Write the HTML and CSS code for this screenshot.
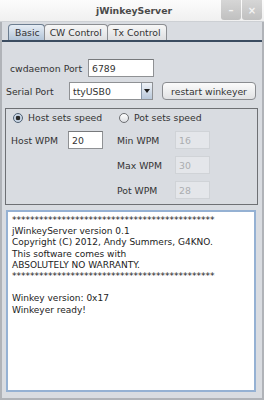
FILE: index.html
```html
<!DOCTYPE html>
<html lang="en">
<head>
    <meta charset="UTF-8">
    <title>jWinkeyServer</title>
    <link rel="stylesheet" href="styles.css">
</head>
<body>
    <div class="titlebar">
        <span class="title">jWinkeyServer</span>
        <div class="wm-buttons">
            <span class="wm-btn">&#8211;</span>
            <span class="wm-btn">&#215;</span>
        </div>
    </div>
    <div class="window">
        <div class="tabs">
            <span class="tab active">Basic</span>
            <span class="tab">CW Control</span>
            <span class="tab">Tx Control</span>
        </div>
        <div class="row row-port">
            <span class="lbl lbl-port">cwdaemon Port</span>
            <span class="field field-port">6789</span>
        </div>
        <div class="row row-serial">
            <span class="lbl lbl-serial">Serial Port</span>
            <div class="combo">
                <span class="combo-text">ttyUSB0</span>
                <span class="combo-arrow"><span class="tri"></span></span>
            </div>
            <span class="btn">restart winkeyer</span>
        </div>
        <div class="group">
            <div class="radio-item radio-host"><span class="radio checked"></span>Host sets speed</div>
            <div class="radio-item radio-pot"><span class="radio"></span>Pot sets speed</div>

            <span class="lbl c1">Host WPM</span>
            <span class="field c2">20</span>
            <span class="lbl c4">Min WPM</span>
            <span class="field disabled c5">16</span>

            <span class="lbl c4">Max WPM</span>
            <span class="field disabled c5">30</span>

            <span class="lbl c4">Pot WPM</span>
            <span class="field disabled c5">28</span>
        </div>
        <div class="log">*********************************************<br>jWinkeyServer version 0.1<br>Copyright (C) 2012, Andy Summers, G4KNO.<br>This software comes with<br>ABSOLUTELY NO WARRANTY.<br>*********************************************<br><br>Winkey version: 0x17<br>Winkeyer ready!</div>
    </div>
</body>
</html>
```

FILE: styles.css
```css
body {
    margin: 0;
    width: 264px;
    height: 400px;
    overflow: hidden;
    font-family: 'DejaVu Sans', sans-serif;
    font-size: 9.3px;
    color: #333;
    background: #d9dce1;
}
.titlebar {
    position: relative;
    height: 22px;
    display: flex;
    align-items: center;
    justify-content: center;
    background: linear-gradient(#fcfcfc, #f0f0f0);
    border-bottom: 1px solid #cdd0d4;
    box-sizing: border-box;
}
.title {
    font-weight: bold;
    font-size: 9.3px;
    color: #4a4a4a;
    padding-left: 4px;
}
.wm-buttons {
    position: absolute;
    top: 0;
    right: 2px;
    display: flex;
    gap: 1px;
}
.wm-btn {
    width: 20px;
    height: 20px;
    display: flex;
    align-items: center;
    justify-content: center;
    background: linear-gradient(#d6d6d6, #c0c0c0);
    border-radius: 0 0 3px 3px;
    color: #f4f4f4;
    font-size: 10px;
    font-weight: bold;
}
.window {
    height: 378px;
    border: 2px solid #b0b3b8;
    border-top: none;
    box-sizing: border-box;
}
.tabs {
    display: flex;
    align-items: flex-end;
    padding: 4px 0 0 6px;
    height: 20px;
    box-sizing: border-box;
    border-bottom: 2px solid #3b4c60;
}
.tab {
    height: 16px;
    box-sizing: border-box;
    padding: 0 5px;
    display: flex;
    align-items: center;
    border: 1px solid #8c8e92;
    border-bottom: none;
    border-radius: 4px 4px 0 0;
    background: linear-gradient(#f7f7f7, #dedfe1);
    margin-right: -1px;
}
.tab.active {
    background: linear-gradient(#e6edf5, #b3c5d8);
    border-color: #6c7d90;
    padding: 0 4px 0 6px;
}
.row {
    display: flex;
    align-items: center;
}
.row-port {
    margin-top: 17px;
    padding-left: 8px;
}
.lbl-port {
    width: 78px;
}
.row-serial {
    margin-top: 5px;
    padding-left: 4px;
}
.lbl-serial {
    width: 63px;
}
.field {
    height: 18px;
    box-sizing: border-box;
    display: flex;
    align-items: center;
    padding-left: 3px;
    background: #fff;
    border: 1px solid #8f9194;
    border-top-color: #77797c;
}
.field-port {
    width: 66px;
}
.field.disabled {
    background: #e4e6ea;
    border-color: #d0d3d7;
    color: #abadb0;
}
.combo {
    width: 84px;
    height: 18px;
    box-sizing: border-box;
    display: flex;
    background: #fff;
    border: 1px solid #8f9194;
}
.combo-text {
    flex: 1;
    display: flex;
    align-items: center;
    padding-left: 3px;
}
.combo-arrow {
    width: 10px;
    display: flex;
    align-items: center;
    justify-content: center;
    border-left: 1px solid #8a98a8;
    background: linear-gradient(#eef2f7, #b9c8da);
}
.tri {
    width: 0;
    height: 0;
    border-left: 3px solid transparent;
    border-right: 3px solid transparent;
    border-top: 4px solid #1c1c1c;
}
.btn {
    margin-left: 9px;
    width: 94px;
    height: 18px;
    box-sizing: border-box;
    display: flex;
    align-items: center;
    justify-content: center;
    border: 1px solid #8a8c90;
    border-radius: 4px;
    background: linear-gradient(#fbfbfb, #e1e2e4);
}
.group {
    margin: 8px 0 0 3px;
    width: 253px;
    height: 97px;
    box-sizing: border-box;
    border: 1px solid #6e7074;
    padding: 2px 0 5px 5px;
    display: grid;
    grid-template-columns: 57px 35px 14px 58px 35px;
    grid-template-rows: 13px 18px 18px 18px;
    row-gap: 7px;
    align-items: center;
}
.c1 { grid-column: 1; }
.c2 { grid-column: 2; }
.c4 { grid-column: 4; }
.c5 { grid-column: 5; }
.radio-item {
    display: flex;
    align-items: center;
    gap: 5px;
    margin-left: 2px;
}
.radio-host { grid-column: 1 / 4; }
.radio-pot { grid-column: 4 / 6; }
.radio {
    width: 10px;
    height: 10px;
    box-sizing: border-box;
    border-radius: 50%;
    border: 1px solid #6d6f73;
    background: linear-gradient(#ffffff, #dcdee2);
}
.radio.checked {
    border-color: #4f5f72;
    background: radial-gradient(circle, #2a2a2a 0 2px, #c9d6e5 2.6px);
}
.log {
    margin: 5px 0 0 4px;
    width: 250px;
    height: 182px;
    box-sizing: border-box;
    background: #fff;
    border: 2px solid #95b1d3;
    padding: 3px 4px;
    font-size: 9px;
    line-height: 11.2px;
    color: #222;
    white-space: nowrap;
    overflow: hidden;
}
```
